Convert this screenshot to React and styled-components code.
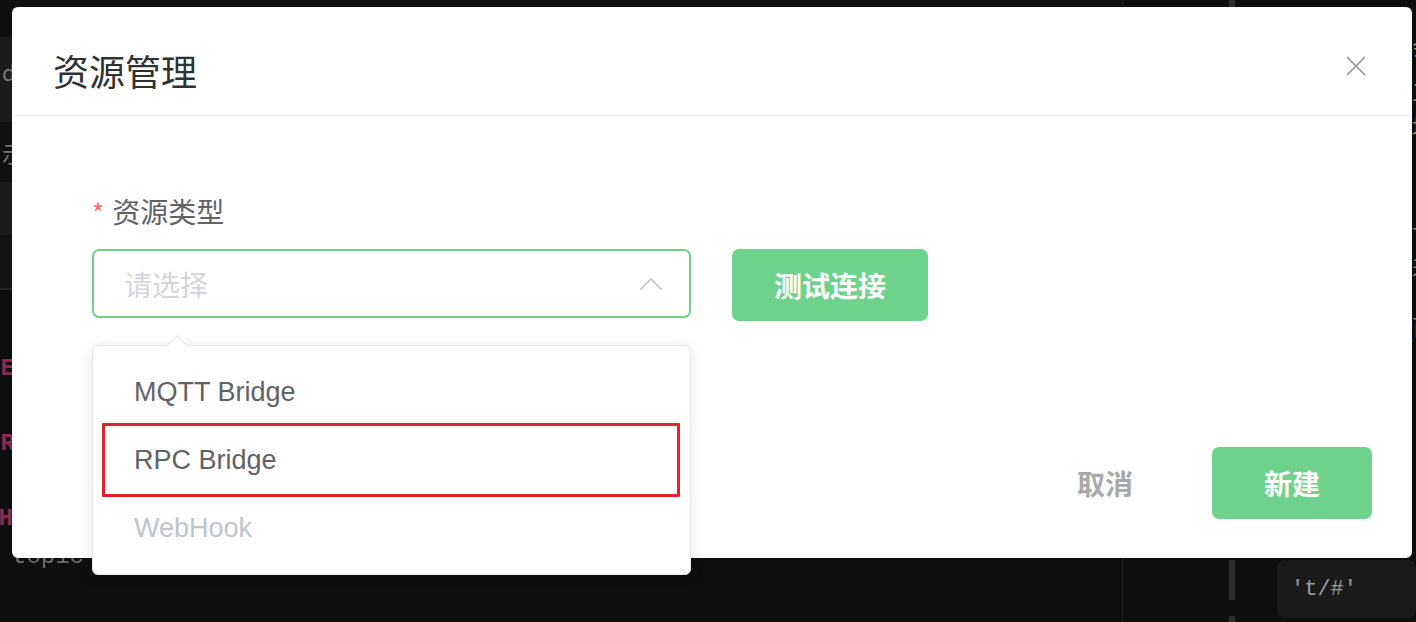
import React from 'react';
import styled, { createGlobalStyle } from 'styled-components';

const GlobalStyle = createGlobalStyle`
  html, body {
    margin: 0;
    padding: 0;
    background: #0e0e0e;
  }
  * { box-sizing: border-box; }
`;

const CJK = `"Noto Sans CJK SC", "Noto Sans", sans-serif`;
const LATIN = `"Liberation Sans", "Noto Sans CJK SC", Arial, sans-serif`;
const MONO = `"Liberation Mono", "DejaVu Sans Mono", monospace`;
const GREEN = '#6fd28c';

const Screen = styled.div`
  position: relative;
  width: 1416px;
  height: 622px;
  overflow: hidden;
  background: #0e0e0e;
`;

/* ---------- editor behind the modal ---------- */

const Editor = styled.div`
  display: flex;
  height: 100%;
`;

const MainCol = styled.div`
  width: 1122px;
  display: flex;
  flex-direction: column;
  overflow: hidden;
`;

const Band = styled.div`
  height: ${(p) => p.$h}px;
  background: ${(p) => p.$tone || 'transparent'};
  border-bottom: ${(p) => (p.$rule ? '2px solid #222' : 'none')};
  display: flex;
  align-items: ${(p) => (p.$top ? 'flex-start' : 'center')};
  padding: ${(p) => (p.$top ? '18px 0 0 2px' : '0 0 0 2px')};
  color: #777;
  font-family: ${CJK};
  font-size: 22px;
  white-space: nowrap;
`;

const CodeLines = styled.div`
  display: flex;
  flex-direction: column;
  padding-top: 60px;
`;

const CodeLine = styled.div`
  height: 37.5px;
  line-height: 37.5px;
  font-family: ${MONO};
  font-size: 24px;
  font-weight: ${(p) => (p.$kw ? 700 : 400)};
  color: ${(p) => (p.$kw ? '#8c2a52' : '#6a6a6a')};
  margin-left: ${(p) => p.$shift || 0}px;
  white-space: pre;
`;

const Rule = styled.div`
  width: 1px;
  background: #242428;
`;

const SideCol = styled.div`
  width: 106px;
`;

const DashedRule = styled.div`
  width: 6px;
  background: repeating-linear-gradient(#2c2c31 0 40px, transparent 40px 56px);
`;

const RightCol = styled.div`
  flex: 1;
  display: flex;
  flex-direction: column;
  padding-top: 30px;
  overflow: hidden;
`;

const EdgeGlyph = styled.div`
  height: ${(p) => p.$h}px;
  padding-left: 177px;
  font-family: ${CJK};
  font-size: 22px;
  color: #888;
  line-height: 30px;
  white-space: nowrap;
`;

const ValueChip = styled.div`
  margin: auto 0 4px 42px;
  height: 58px;
  border-radius: 8px;
  background: #1a1a1a;
  display: flex;
  align-items: center;
  padding-left: 14px;
  font-family: ${MONO};
  font-size: 22px;
  color: #9a9a9a;
`;

/* ---------- modal ---------- */

const Dialog = styled.div`
  position: absolute;
  left: 12px;
  top: 7px;
  width: 1400px;
  height: 551px;
  background: #fff;
  border-radius: 6px;
  display: flex;
  flex-direction: column;
`;

const Header = styled.div`
  height: 109px;
  border-bottom: 1px solid #ebeef5;
  display: flex;
  align-items: center;
  justify-content: space-between;
  padding: 18px 46px 0 41px;
`;

const Title = styled.h2`
  margin: 0;
  font-family: ${CJK};
  font-size: 36px;
  font-weight: 400;
  color: #303133;
  line-height: 48px;
`;

const CloseButton = styled.button`
  width: 20px;
  height: 20px;
  margin-bottom: 8px;
  padding: 0;
  border: none;
  background: none;
  display: flex;
`;

const Body = styled.div`
  padding: 74px 80px 0 80px;
`;

const FormItem = styled.div`
  display: flex;
  flex-direction: column;
  gap: 17px;
`;

const Label = styled.label`
  font-family: ${CJK};
  font-size: 28px;
  line-height: 40px;
  color: #606266;
  display: flex;
  align-items: center;
  gap: 8px;
`;

const Star = styled.span`
  color: #f56c6c;
  font-size: 26px;
  margin-top: 2px;
`;

const ControlRow = styled.div`
  display: flex;
  align-items: flex-start;
  gap: 41px;
`;

const SelectWrap = styled.div`
  position: relative;
  width: 599px;
`;

const SelectBox = styled.div`
  height: 69px;
  border: 2px solid ${GREEN};
  border-radius: 7px;
  display: flex;
  align-items: center;
  justify-content: space-between;
  padding: 0 26px 0 30px;
`;

const Placeholder = styled.span`
  font-family: ${CJK};
  font-size: 28px;
  color: #d3d5db;
`;

const Dropdown = styled.ul`
  position: absolute;
  top: 96px;
  left: 0;
  width: 599px;
  height: 230px;
  margin: 0;
  padding: 12px 0 0;
  list-style: none;
  background: #fff;
  border: 1px solid #e4e7ed;
  border-radius: 6px;
  box-shadow: 0 2px 14px rgba(0, 0, 0, 0.1);
  z-index: 2;

  &::before {
    content: '';
    position: absolute;
    top: -8px;
    left: 77px;
    width: 13px;
    height: 13px;
    background: #fff;
    border-top: 1px solid #e4e7ed;
    border-left: 1px solid #e4e7ed;
    transform: rotate(45deg);
  }
`;

const Option = styled.li`
  position: relative;
  height: 68px;
  display: flex;
  align-items: center;
  padding-left: 41px;
  font-family: ${LATIN};
  font-size: 27px;
  color: ${(p) => (p.$disabled ? '#c0c4cc' : '#606266')};

  ${(p) =>
    p.$marked &&
    `
    &::after {
      content: '';
      position: absolute;
      top: -3px;
      bottom: -3px;
      left: 9px;
      right: 10px;
      border: 3px solid #e8202a;
      border-radius: 1px;
    }
  `}
`;

const Button = styled.button`
  height: ${(p) => p.$h || 72}px;
  width: ${(p) => p.$w}px;
  border: none;
  border-radius: 7px;
  background: ${(p) => (p.$plain ? 'transparent' : GREEN)};
  color: ${(p) => (p.$plain ? '#a8a8a8' : '#fff')};
  font-family: ${CJK};
  font-size: 28px;
  font-weight: 700;
  padding: 0;
  display: flex;
  align-items: center;
  justify-content: center;
`;

const Footer = styled.div`
  margin-top: auto;
  display: flex;
  justify-content: flex-end;
  gap: 27px;
  padding: 0 40px 39px 0;
`;

const options = [
  { label: 'MQTT Bridge' },
  { label: 'RPC Bridge', marked: true },
  { label: 'WebHook', disabled: true },
];

export default function App() {
  return (
    <>
      <GlobalStyle />
      <Screen>
        <Editor>
          <MainCol>
            <Band $h={37} $tone="#0f0f0f" />
            <Band $h={85} $tone="#1b1b1b" $top>d</Band>
            <Band $h={60} $tone="#111">示</Band>
            <Band $h={53} $tone="#1b1b1b" />
            <Band $h={55} $tone="#141414" $rule />
            <CodeLines>
              <CodeLine $kw $shift={-14}>SELECT</CodeLine>
              <CodeLine $shift={10}>.</CodeLine>
              <CodeLine $kw $shift={-14}>FROM</CodeLine>
              <CodeLine> </CodeLine>
              <CodeLine $kw $shift={-16}>WHERE</CodeLine>
              <CodeLine $shift={12}>topic</CodeLine>
            </CodeLines>
          </MainCol>
          <Rule />
          <SideCol />
          <DashedRule />
          <RightCol>
            <EdgeGlyph $h={45}>会</EdgeGlyph>
            <EdgeGlyph $h={35}>三</EdgeGlyph>
            <EdgeGlyph $h={100}>场</EdgeGlyph>
            <EdgeGlyph $h={40}>—</EdgeGlyph>
            <EdgeGlyph $h={60}>来</EdgeGlyph>
            <EdgeGlyph $h={60}>百</EdgeGlyph>
            <ValueChip>'t/#'</ValueChip>
          </RightCol>
        </Editor>

        <Dialog>
          <Header>
            <Title>资源管理</Title>
            <CloseButton aria-label="关闭">
              <svg width="20" height="20" viewBox="0 0 20 20">
                <path d="M1 1 L19 19 M19 1 L1 19" stroke="#909399" strokeWidth="1.6" fill="none" />
              </svg>
            </CloseButton>
          </Header>

          <Body>
            <FormItem>
              <Label>
                <Star>*</Star>
                资源类型
              </Label>
              <ControlRow>
                <SelectWrap>
                  <SelectBox>
                    <Placeholder>请选择</Placeholder>
                    <svg width="24" height="14" viewBox="0 0 24 14">
                      <polyline points="1.5,12.5 12,2 22.5,12.5" stroke="#c0c4cc" strokeWidth="1.6" fill="none" />
                    </svg>
                  </SelectBox>
                  <Dropdown>
                    {options.map((o) => (
                      <Option key={o.label} $marked={o.marked} $disabled={o.disabled}>
                        {o.label}
                      </Option>
                    ))}
                  </Dropdown>
                </SelectWrap>
                <Button $w={196}>测试连接</Button>
              </ControlRow>
            </FormItem>
          </Body>

          <Footer>
            <Button $w={160} $plain>取消</Button>
            <Button $w={160}>新建</Button>
          </Footer>
        </Dialog>
      </Screen>
    </>
  );
}
